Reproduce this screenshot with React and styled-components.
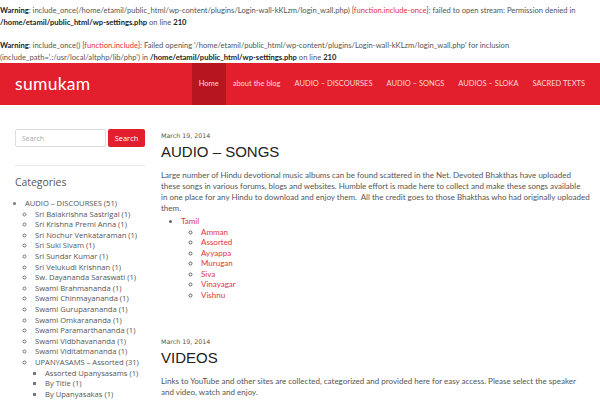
import React from "react";
import styled, { createGlobalStyle } from "styled-components";

const Global = createGlobalStyle`
  body {
    margin: 0;
    background: #fff;
    font-family: Lato, "Open Sans", sans-serif;
    color: #555;
  }
`;

const Warnings = styled.div`
  padding-top: 4px;
  font-size: 7.6px;
  line-height: 12px;
  color: #555;

  p {
    margin: 0 0 11px;
  }
  p:last-child {
    margin-bottom: 0;
  }
  b {
    color: #222;
  }
  a {
    color: #e3323f;
    text-decoration: none;
  }
`;

const Header = styled.header`
  display: flex;
  justify-content: space-between;
  align-items: stretch;
  height: 42px;
  padding: 0 8px 0 15px;
  background: #e31e2d;
`;

const Logo = styled.div`
  font-size: 17.5px;
  line-height: 42px;
  color: #fff;
  letter-spacing: 0.3px;
`;

const Nav = styled.nav`
  display: flex;
`;

const NavItem = styled.a`
  padding: 0 7px;
  line-height: 42px;
  font-size: 7.5px;
  color: #fbd9dc;
  text-decoration: none;
  background: ${(p) => (p.$active ? "#b7161f" : "transparent")};
`;

const Layout = styled.div`
  display: flex;
  gap: 16px;
  padding: 24px 9px 0 15px;
`;

const Sidebar = styled.aside`
  width: 130px;
  flex-shrink: 0;
  font-family: "Open Sans", Lato, sans-serif;
`;

const SearchForm = styled.form`
  display: flex;
  gap: 2px;
`;

const SearchInput = styled.input`
  box-sizing: border-box;
  width: 91px;
  height: 18px;
  padding: 0 6px;
  border: 1px solid #ddd;
  border-radius: 2px;
  font-family: inherit;
  font-size: 7px;
  &::placeholder {
    color: #aaa;
  }
`;

const SearchButton = styled.button`
  width: 37px;
  height: 18px;
  border: 0;
  border-radius: 2px;
  background: #e31e2d;
  color: #fff;
  font-family: inherit;
  font-size: 7.4px;
  padding: 0;
`;

const Divider = styled.hr`
  margin: 18px 0 0;
  border: 0;
  border-top: 1px solid #e6e6e6;
`;

const WidgetTitle = styled.h3`
  margin: 9px 0 0;
  font-size: 10.4px;
  line-height: 14px;
  font-weight: 400;
  color: #555;
`;

const CatList = styled.ul`
  margin: ${(p) => (p.$top ? "9px 0 0" : "0")};
  padding-left: 10px;
  font-size: 7.6px;
  line-height: 10.6px;
  color: #555;

  li::marker {
    color: #777;
  }
`;

const Content = styled.main`
  flex: 1;
  min-width: 0;
  padding-top: 2px;
`;

const Post = styled.article`
  margin-bottom: 37px;
`;

const PostDate = styled.div`
  font-family: "DejaVu Sans", sans-serif;
  font-size: 6.3px;
  line-height: 9px;
  color: #555;
`;

const PostTitle = styled.h2`
  margin: 3px 0 0;
  font-family: "Liberation Sans", Arial, sans-serif;
  font-size: 15px;
  line-height: 18px;
  font-weight: 400;
  color: #222;
`;

const PostText = styled.p`
  margin: 9px 0 0;
  font-size: 8px;
  line-height: 11px;
  color: #555;
`;

const LinkList = styled.ul`
  margin: ${(p) => (p.$top ? "2px 0 0" : "0")};
  padding-left: 20px;
  font-size: 8px;
  line-height: 10.55px;

  a {
    color: #e3323f;
    text-decoration: none;
  }
  li::marker {
    color: #666;
  }
`;

const navItems = [
  "Home",
  "about the blog",
  "AUDIO – DISCOURSES",
  "AUDIO – SONGS",
  "AUDIOS – SLOKA",
  "SACRED TEXTS",
];

const speakers = [
  "Sri Balakrishna Sastrigal (1)",
  "Sri Krishna Premi Anna (1)",
  "Sri Nochur Venkataraman (1)",
  "Sri Suki Sivam (1)",
  "Sri Sundar Kumar (1)",
  "Sri Velukudi Krishnan (1)",
  "Sw. Dayananda Saraswati (1)",
  "Swami Brahmananda (1)",
  "Swami Chinmayananda (1)",
  "Swami Guruparananda (1)",
  "Swami Omkarananda (1)",
  "Swami Paramarthananda (1)",
  "Swami Vidbhavananda (1)",
  "Swami Viditatmananda (1)",
];

const upanyasams = ["Assorted Upanysasams (1)", "By Title (1)", "By Upanyasakas (1)"];

const tamil = ["Amman", "Assorted", "Ayyappa", "Murugan", "Siva", "Vinayagar", "Vishnu"];

export default function App() {
  return (
    <>
      <Global />
      <Warnings>
        <p>
          <b>Warning</b>: include_once(/home/etamil/public_html/wp-content/plugins/Login-wall-kKLzm/login_wall.php) [
          <a href="#">function.include-once</a>]: failed to open stream: Permission denied in{" "}
          <b>/home/etamil/public_html/wp-settings.php</b> on line <b>210</b>
        </p>
        <p>
          <b>Warning</b>: include_once() [<a href="#">function.include</a>]: Failed opening
          '/home/etamil/public_html/wp-content/plugins/Login-wall-kKLzm/login_wall.php' for inclusion
          (include_path='.:/usr/local/altphp/lib/php') in <b>/home/etamil/public_html/wp-settings.php</b> on line{" "}
          <b>210</b>
        </p>
      </Warnings>

      <Header>
        <Logo>sumukam</Logo>
        <Nav>
          {navItems.map((n, i) => (
            <NavItem key={n} href="#" $active={i === 0}>
              {n}
            </NavItem>
          ))}
        </Nav>
      </Header>

      <Layout>
        <Sidebar>
          <SearchForm onSubmit={(e) => e.preventDefault()}>
            <SearchInput placeholder="Search" />
            <SearchButton type="submit">Search</SearchButton>
          </SearchForm>
          <Divider />
          <WidgetTitle>Categories</WidgetTitle>
          <CatList $top>
            <li>
              AUDIO – DISCOURSES (51)
              <CatList>
                {speakers.map((s) => (
                  <li key={s}>{s}</li>
                ))}
                <li>
                  UPANYASAMS – Assorted (31)
                  <CatList>
                    {upanyasams.map((s) => (
                      <li key={s}>{s}</li>
                    ))}
                  </CatList>
                </li>
              </CatList>
            </li>
          </CatList>
        </Sidebar>

        <Content>
          <Post>
            <PostDate>March 19, 2014</PostDate>
            <PostTitle>AUDIO – SONGS</PostTitle>
            <PostText>
              Large number of Hindu devotional music albums can be found scattered in the Net. Devoted Bhakthas have
              uploaded these songs in various forums, blogs and websites. Humble effort is made here to collect and
              make these songs available in&nbsp;one place for any Hindu to download and enjoy them.&nbsp; All the
              credit goes to those Bhakthas who had originally uploaded them.
            </PostText>
            <LinkList $top>
              <li>
                <a href="#">Tamil</a>
                <LinkList>
                  {tamil.map((t) => (
                    <li key={t}>
                      <a href="#">{t}</a>
                    </li>
                  ))}
                </LinkList>
              </li>
            </LinkList>
          </Post>
          <Post>
            <PostDate>March 19, 2014</PostDate>
            <PostTitle>VIDEOS</PostTitle>
            <PostText>
              Links to YouTube and other sites are collected, categorized and provided here for easy access. Please
              select the speaker and&nbsp;video, watch and enjoy.
            </PostText>
          </Post>
        </Content>
      </Layout>
    </>
  );
}
